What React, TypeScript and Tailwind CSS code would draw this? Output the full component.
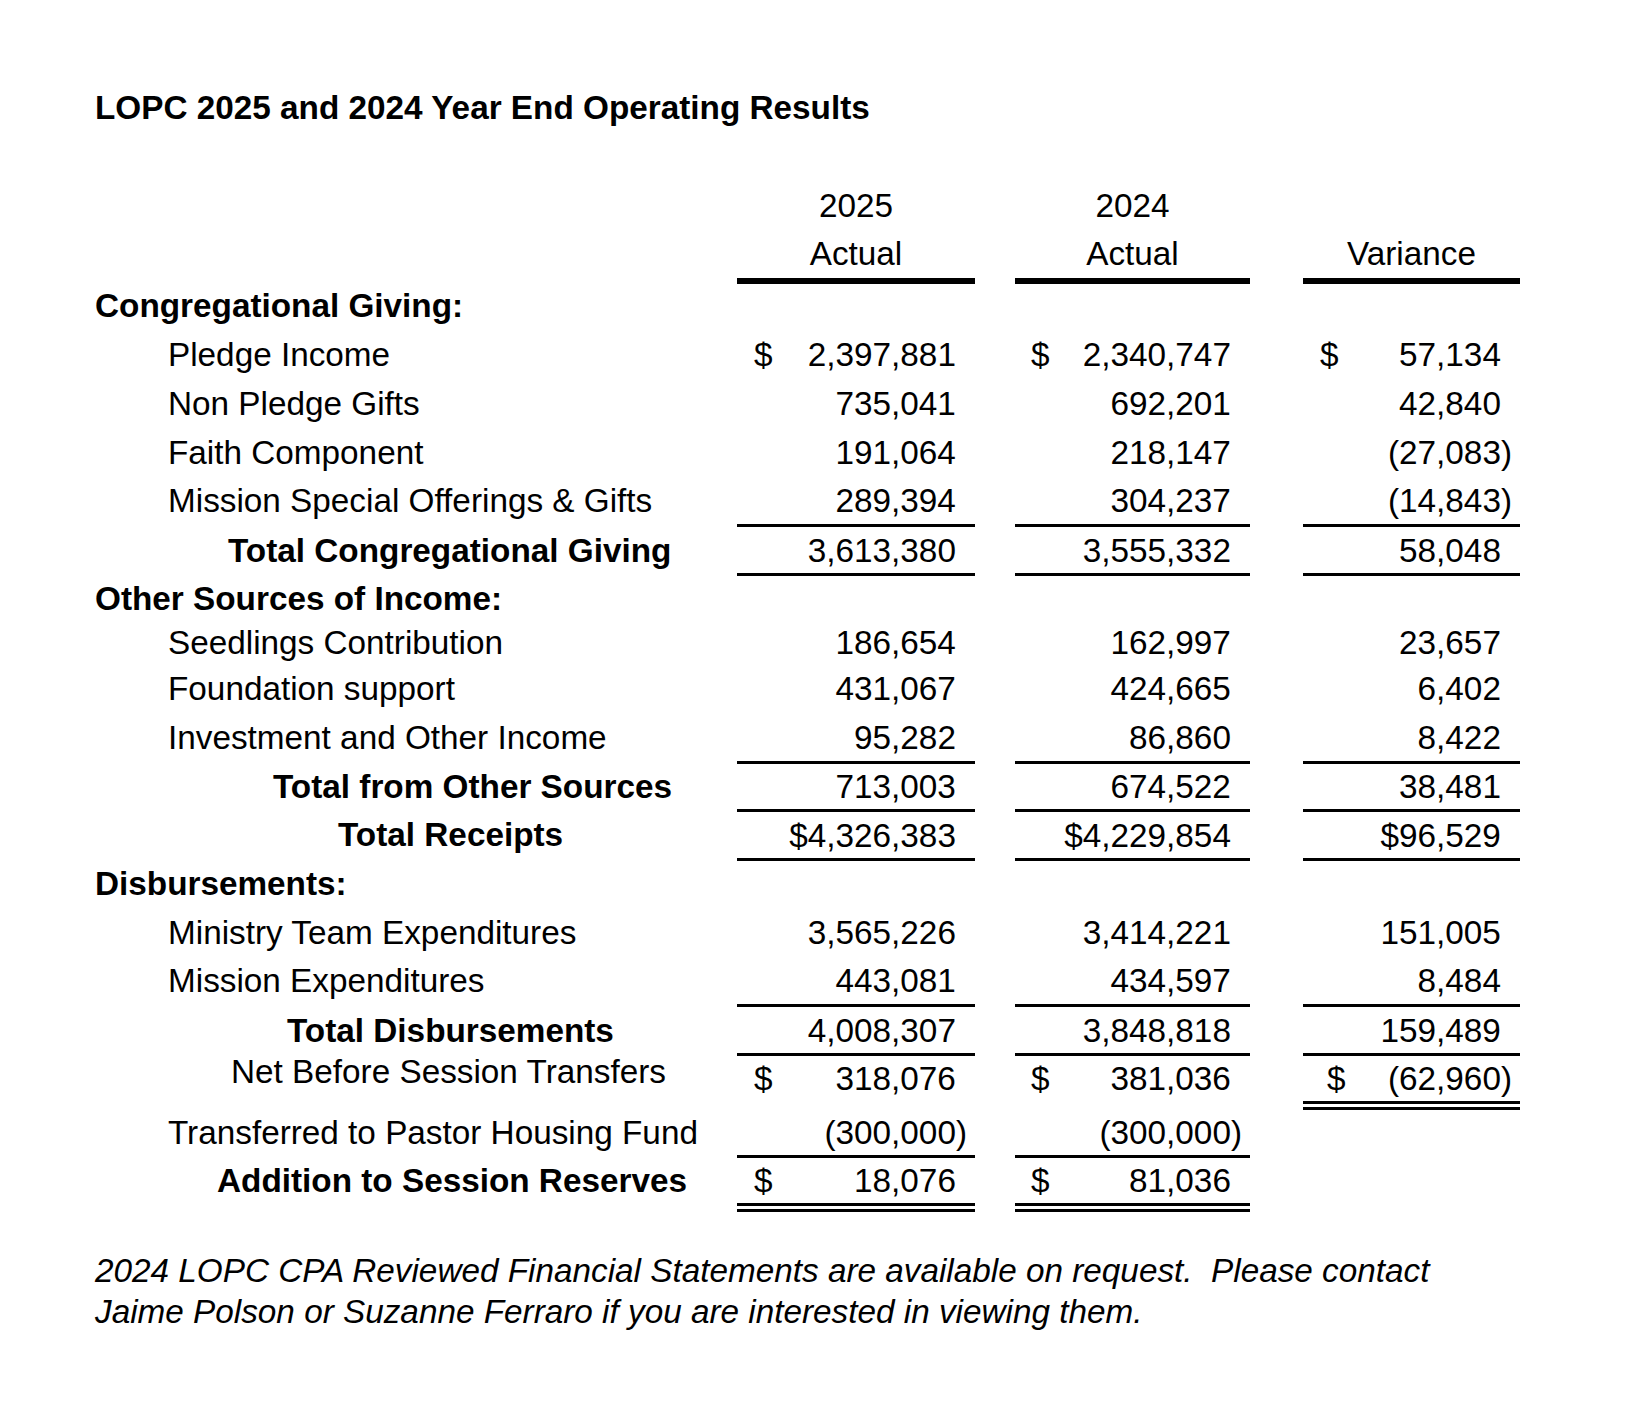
import React from 'react';

type Border = 'none' | 'single' | 'double' | 'thick' | 'pad9';

type Row = {
  label: string;
  pl: string; // label padding class
  bold?: boolean;
  h: string;
  lb?: string; // label extra classes (vertical tuning)
  vals?: (string | null)[];
  dollar?: boolean[];
  borders?: Border[];
};

const borderClass: Record<Border, string> = {
  none: '',
  single: 'border-b-[3px] border-black',
  double: 'border-b-[9px] border-double border-black',
  thick: 'border-b-[6px] border-black',
  pad9: 'border-b-[9px] border-transparent',
};

const rows: Row[] = [
  { label: 'Congregational Giving:', pl: 'pl-0', bold: true, h: 'h-[46px]', lb: 'pb-[4px]' },
  {
    label: 'Pledge Income',
    pl: 'pl-[73px]',
    h: 'h-[49px]',
    vals: ['2,397,881', '2,340,747', '57,134'],
    dollar: [true, true, true],
  },
  { label: 'Non Pledge Gifts', pl: 'pl-[73px]', h: 'h-[49px]', vals: ['735,041', '692,201', '42,840'] },
  { label: 'Faith Component', pl: 'pl-[73px]', h: 'h-[48px]', vals: ['191,064', '218,147', '(27,083)'] },
  {
    label: 'Mission Special Offerings & Gifts',
    pl: 'pl-[73px]',
    h: 'h-[51px]',
    lb: 'pb-[3px]',
    vals: ['289,394', '304,237', '(14,843)'],
    borders: ['single', 'single', 'single'],
  },
  {
    label: 'Total Congregational Giving',
    pl: 'pl-[133px]',
    bold: true,
    h: 'h-[49px]',
    lb: 'pb-[3px]',
    vals: ['3,613,380', '3,555,332', '58,048'],
    borders: ['single', 'single', 'single'],
  },
  { label: 'Other Sources of Income:', pl: 'pl-0', bold: true, h: 'h-[45px]' },
  { label: 'Seedlings Contribution', pl: 'pl-[73px]', h: 'h-[42px]', vals: ['186,654', '162,997', '23,657'] },
  { label: 'Foundation support', pl: 'pl-[73px]', h: 'h-[50px]', vals: ['431,067', '424,665', '6,402'] },
  {
    label: 'Investment and Other Income',
    pl: 'pl-[73px]',
    h: 'h-[51px]',
    lb: 'pb-[3px]',
    vals: ['95,282', '86,860', '8,422'],
    borders: ['single', 'single', 'single'],
  },
  {
    label: 'Total from Other Sources',
    pl: 'pl-[178px]',
    bold: true,
    h: 'h-[48px]',
    lb: 'pb-[3px]',
    vals: ['713,003', '674,522', '38,481'],
    borders: ['single', 'single', 'single'],
  },
  {
    label: 'Total Receipts',
    pl: 'pl-[243px]',
    bold: true,
    h: 'h-[49px]',
    lb: 'pb-[5px]',
    vals: ['$4,326,383', '$4,229,854', '$96,529'],
    borders: ['single', 'single', 'single'],
  },
  { label: 'Disbursements:', pl: 'pl-0', bold: true, h: 'h-[46px]', lb: 'pb-[2px]' },
  { label: 'Ministry Team Expenditures', pl: 'pl-[73px]', h: 'h-[50px]', vals: ['3,565,226', '3,414,221', '151,005'] },
  {
    label: 'Mission Expenditures',
    pl: 'pl-[73px]',
    h: 'h-[50px]',
    lb: 'pb-[3px]',
    vals: ['443,081', '434,597', '8,484'],
    borders: ['single', 'single', 'single'],
  },
  {
    label: 'Total Disbursements',
    pl: 'pl-[192px]',
    bold: true,
    h: 'h-[49px]',
    lb: 'pb-[3px]',
    vals: ['4,008,307', '3,848,818', '159,489'],
    borders: ['single', 'single', 'single'],
  },
  {
    label: 'Net Before Session Transfers',
    pl: 'pl-[136px]',
    h: 'h-[54px]',
    lb: 'pb-[23px]',
    vals: ['318,076', '381,036', '(62,960)'],
    dollar: [true, true, true],
    borders: ['pad9', 'pad9', 'double'],
  },
  {
    label: 'Transferred to Pastor Housing Fund',
    pl: 'pl-[73px]',
    h: 'h-[48px]',
    lb: 'pb-[3px]',
    vals: ['(300,000)', '(300,000)', null],
    borders: ['single', 'single', 'none'],
  },
  {
    label: 'Addition to Session Reserves',
    pl: 'pl-[122px]',
    bold: true,
    h: 'h-[54px]',
    lb: 'pb-[9px]',
    vals: ['18,076', '81,036', null],
    dollar: [true, true, false],
    borders: ['double', 'double', 'none'],
  },
];

const colW = ['w-[238px]', 'w-[235px]', 'w-[217px]'];
const colM = ['ml-0', 'ml-[40px]', 'ml-[53px]'];

function Amount({ v }: { v: string }) {
  const neg = v.startsWith('(');
  return (
    <span className="ml-auto pr-[8px] whitespace-pre">
      {v}
      {!neg && <span className="invisible">)</span>}
    </span>
  );
}

export default function App() {
  return (
    <div
      className="min-h-screen bg-white pl-[95px] pt-[91px] text-[33.3px] text-black"
      style={{ fontFamily: '"Liberation Sans", Arial, sans-serif' }}
    >
      <h1 className="font-bold leading-none">LOPC 2025 and 2024 Year End Operating Results</h1>

      <div className="mt-[57px]">
        {/* column headers */}
        <div className="flex h-[48px] leading-none">
          <div className="w-[642px]" />
          {['2025', '2024', ''].map((t, i) => (
            <div key={i} className={`${colW[i]} ${colM[i]} flex items-center justify-center`}>
              {t}
            </div>
          ))}
        </div>
        <div className="flex h-[55px] leading-none">
          <div className="w-[642px]" />
          {['Actual', 'Actual', 'Variance'].map((t, i) => (
            <div
              key={i}
              className={`${colW[i]} ${colM[i]} flex items-center justify-center border-b-[6px] border-black`}
            >
              {t}
            </div>
          ))}
        </div>

        {rows.map((r, ri) => (
          <div key={ri} className={`flex ${r.h} leading-none`}>
            <div className={`w-[642px] flex items-center whitespace-nowrap ${r.pl} ${r.lb ?? ''} ${r.bold ? 'font-bold' : ''}`}>
              {r.label}
            </div>
            {r.vals &&
              r.vals.map((v, i) => {
                const dpl = i === 1 ? 'pl-[16px]' : i === 2 && v?.startsWith('(') ? 'pl-[24px]' : 'pl-[17px]';
                return (
                  <div
                    key={i}
                    className={`${colW[i]} ${colM[i]} flex items-center ${borderClass[r.borders?.[i] ?? 'none']}`}
                  >
                    {v !== null && r.dollar?.[i] && <span className={dpl}>$</span>}
                    {v !== null && <Amount v={v} />}
                  </div>
                );
              })}
          </div>
        ))}
      </div>

      <p className="mt-[38px] italic leading-[41px]">
        2024 LOPC CPA Reviewed Financial Statements are available on request.{'\u00a0'} Please contact
        <br />
        Jaime Polson or Suzanne Ferraro if you are interested in viewing them.
      </p>
    </div>
  );
}
